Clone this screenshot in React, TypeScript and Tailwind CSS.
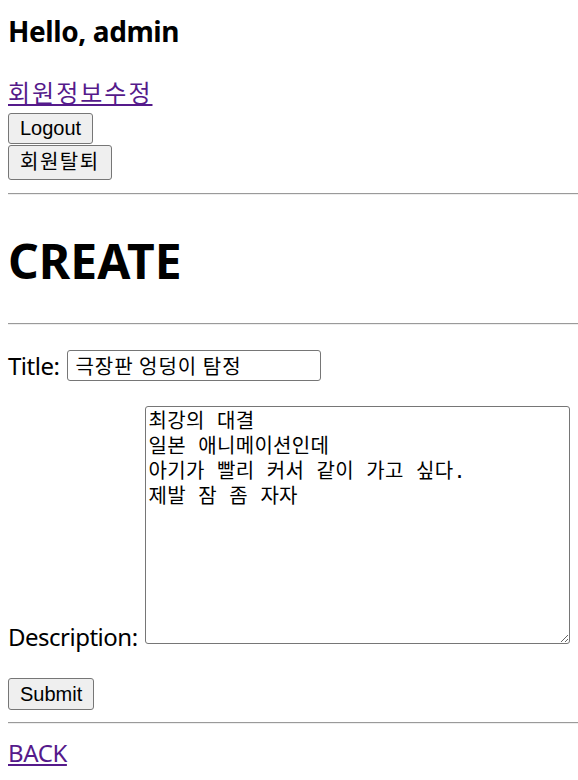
export default function App() {
  return (
    <div className="bg-white min-h-[780px] pl-[8px] text-black font-['Noto_Sans','Noto_Sans_CJK_KR',sans-serif]">
      <h3 className="pt-[12px] h-[50px] text-[28px] leading-[38px] font-bold tracking-[-0.4px]">Hello, admin</h3>
      <div className="mt-[26px] h-[33px] text-[24px] leading-[33px]">
        <a href="#" className="text-[#551a8b] underline tracking-[2px]">회원정보수정</a>
      </div>
      <div className="mt-[4px] flex flex-col items-start">
        <button className="h-[31px] px-[11px] bg-[#efefef] border border-[#767676] rounded-[3px] text-[20px] leading-[29px] font-['Liberation_Sans','Noto_Sans_CJK_KR',sans-serif]">
          Logout
        </button>
        <button className="mt-[1px] h-[35px] px-[11px] bg-[#efefef] border border-[#767676] rounded-[3px] text-[20px] leading-[33px] tracking-[1.5px] font-['Liberation_Sans','Noto_Sans_CJK_KR',sans-serif]">
          회원탈퇴
        </button>
      </div>
      <hr className="mt-[13px] border-t border-t-[#9a9a9a] border-b border-b-[#eeeeee]" />
      <h1 className="mt-[26px] h-[80px] text-[48px] leading-[80px] font-bold">CREATE</h1>
      <hr className="mt-[22px] border-t border-t-[#9a9a9a] border-b border-b-[#eeeeee]" />
      <form className="mt-[25px] tracking-[-0.5px]">
        <div className="flex items-center h-[31px]">
          <label className="text-[24px] leading-[31px]">Title:</label>
          <input
            defaultValue="극장판 엉덩이 탐정"
            className="ml-[8px] w-[254px] h-[31px] px-[7px] border border-[#767676] rounded-[3px] text-[20px] tracking-[1px] font-['Noto_Sans_CJK_KR',sans-serif] outline-none"
          />
        </div>
        <div className="mt-[25px] flex items-end w-[562px]">
          <label className="text-[24px] leading-[30px] mb-[-8px]">Description:</label>
          <textarea
            defaultValue={"최강의 대결\n일본 애니메이션인데\n아기가 빨리 커서 같이 가고 싶다.\n제발 잠 좀 자자"}
            className="ml-[7px] w-[425px] h-[238px] px-[3px] py-[2px] border border-[#767676] rounded-[3px] text-[20px] leading-[25px] tracking-[0.3px] font-['DejaVu_Sans_Mono','Noto_Sans_CJK_KR',monospace] outline-none resize"
          />
        </div>
        <button
          type="button"
          className="mt-[34px] h-[32px] px-[11px] bg-[#efefef] border border-[#767676] rounded-[3px] text-[20px] leading-[30px] tracking-normal font-['Liberation_Sans',sans-serif]"
        >
          Submit
        </button>
      </form>
      <hr className="mt-[12px] border-t border-t-[#9a9a9a] border-b border-b-[#eeeeee]" />
      <div className="mt-[13px] text-[24px] leading-[32px] tracking-[-0.4px]">
        <a href="#" className="text-[#551a8b] underline">BACK</a>
      </div>
    </div>
  )
}
